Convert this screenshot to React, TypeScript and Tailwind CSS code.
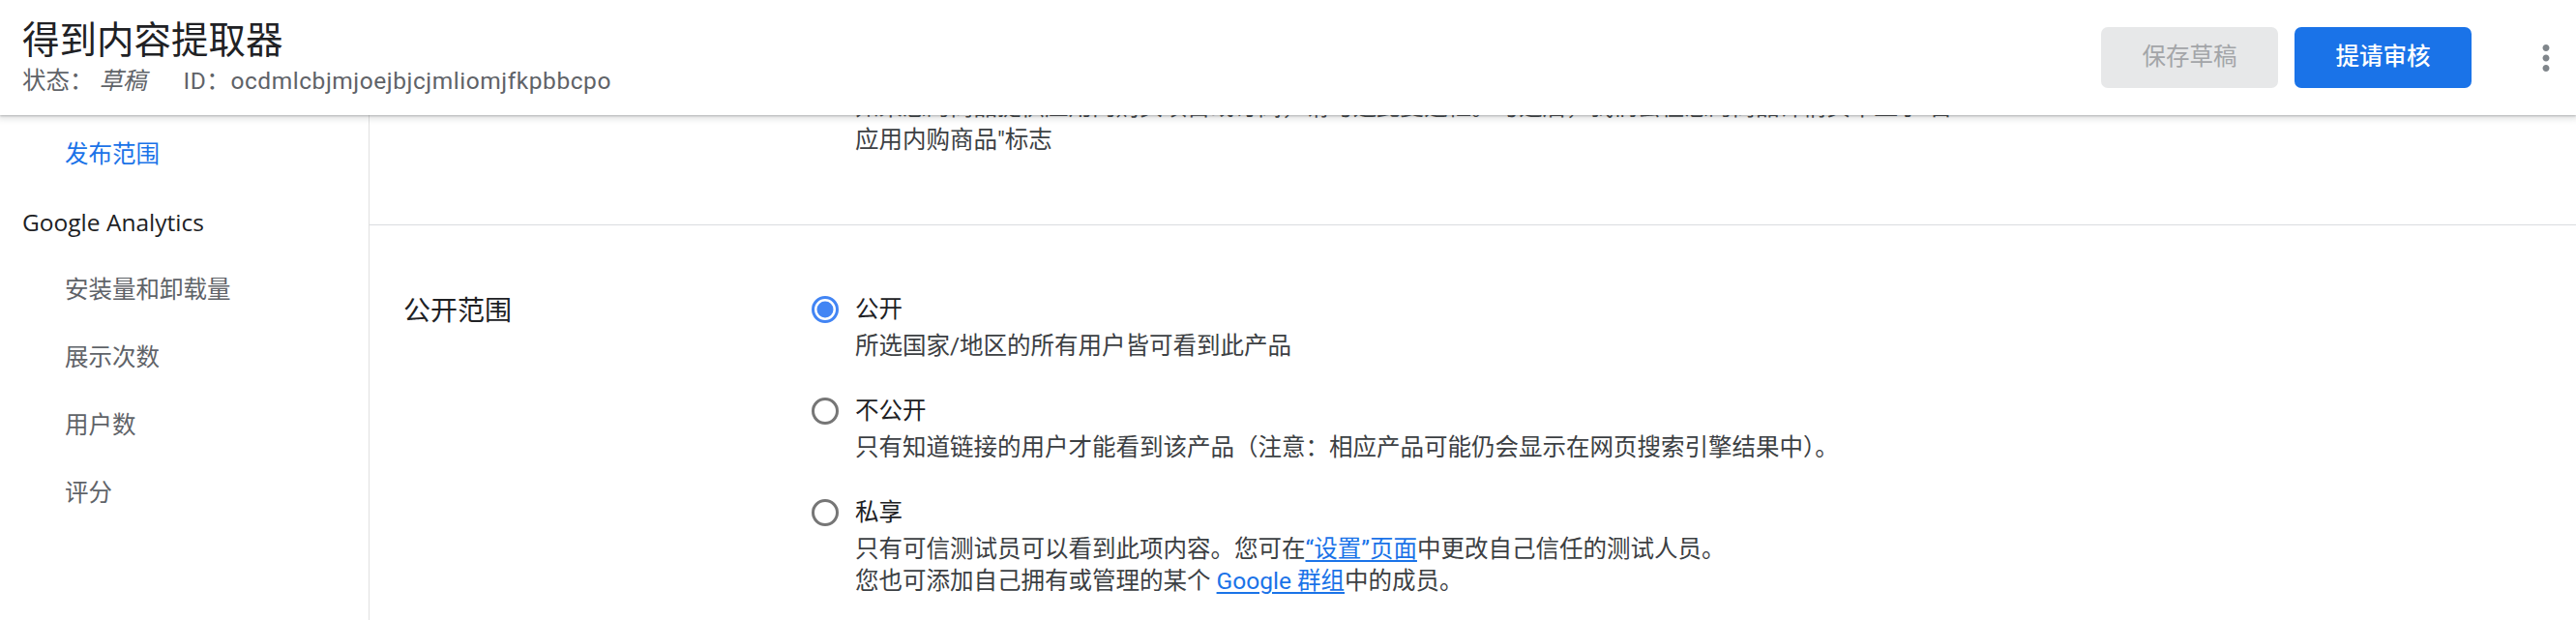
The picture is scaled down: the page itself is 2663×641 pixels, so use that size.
import React from 'react';

const FONT = "font-[Roboto,'Noto_Sans_CJK_SC',sans-serif]";

function Radio({ checked }: { checked?: boolean }) {
  return (
    <svg width="28" height="28" viewBox="0 0 28 28" className="shrink-0">
      <circle cx="14" cy="14" r="12.5" fill="none" stroke={checked ? '#4285f4' : '#767676'} strokeWidth="3" />
      {checked && <circle cx="14" cy="14" r="8.5" fill="#4285f4" />}
    </svg>
  );
}

function Option({
  label,
  checked,
  children,
}: {
  label: string;
  checked?: boolean;
  children: React.ReactNode;
}) {
  return (
    <div className="flex">
      <div className="h-[36px] w-[45px] flex items-center">
        <Radio checked={checked} />
      </div>
      <div>
        <div className="text-[24.5px] leading-[36px] text-[#202124]">{label}</div>
        <div className="mt-[3px] text-[24.5px] leading-[33px] text-[#3c4043]">{children}</div>
      </div>
    </div>
  );
}

const NAV = ['安装量和卸载量', '展示次数', '用户数', '评分'];

export default function App() {
  return (
    <div className={`${FONT} h-[641px] w-full flex flex-col overflow-hidden bg-white`}>
      {/* Header */}
      <header className="relative z-10 h-[119px] shrink-0 flex items-center bg-white pl-[23px] pr-[10px] shadow-[0_1px_2px_rgba(60,64,67,0.3),0_2px_6px_2px_rgba(60,64,67,0.15)]">
        <div className="flex-1 min-w-0">
          <h1 className="text-[38.5px] leading-[48px] text-[#202124]">得到内容提取器</h1>
          <div className="flex text-[24.5px] leading-[35px] text-[#5f6368] whitespace-nowrap">
            <span>状态：</span>
            <span className="ml-[6px] italic">草稿</span>
            <span className="ml-[38px] tracking-[0.55px]">ID：ocdmlcbjmjoejbjcjmliomjfkpbbcpo</span>
          </div>
        </div>
        <div className="flex gap-[17px]">
          <button className="h-[63px] w-[183px] rounded-[7px] bg-[#e7e8e9] text-[24.5px] text-[#a3a5a8]">保存草稿</button>
          <button className="h-[63px] w-[183px] rounded-[7px] bg-[#1a73e8] text-[24.5px] font-medium text-white">提请审核</button>
        </div>
        <div className="ml-[56px] h-[42px] w-[42px] flex items-center justify-center">
          <svg width="42" height="42" viewBox="0 0 24 24" fill="#80868b">
            <path d="M12 8c1.1 0 2-.9 2-2s-.9-2-2-2-2 .9-2 2 .9 2 2 2zm0 2c-1.1 0-2 .9-2 2s.9 2 2 2 2-.9 2-2-.9-2-2-2zm0 6c-1.1 0-2 .9-2 2s.9 2 2 2 2-.9 2-2-.9-2-2-2z" />
          </svg>
        </div>
      </header>

      <div className="flex flex-1 min-h-0">
        {/* Sidebar */}
        <aside className="w-[382px] shrink-0 border-r border-[#e0e0e0] pt-[6px]">
          <div className="h-[70px] flex items-center pl-[67px] text-[24.5px] text-[#1a73e8]">发布范围</div>
          <div className="h-[70px] flex items-center pl-[23px] font-['Open_Sans',sans-serif] text-[24.5px] font-medium text-[#202124]">
            Google Analytics
          </div>
          {NAV.map((item) => (
            <div key={item} className="h-[70px] flex items-center pl-[67px] text-[24.5px] text-[#5f6368]">
              {item}
            </div>
          ))}
        </aside>

        {/* Main */}
        <main className="flex-1 min-w-0 overflow-hidden">
          <div className="-mt-[25px]">
            {/* In-app purchase section (scrolled) */}
            <div className="flex pl-[35px] pb-[70px] border-b border-[#dadce0]">
              <div className="w-[422px] shrink-0" />
              <div className="pl-[45px] text-[24.5px] leading-[34px] text-[#3c4043] whitespace-nowrap">
                如果您的商品提供应用内购买项目或订阅，请勾选此复选框。勾选后，我们会在您的商品详情页中显示"含
                <br />
                应用内购商品"标志
              </div>
            </div>

            {/* Visibility */}
            <div className="flex pl-[35px] pt-[69px]">
              <div className="w-[422px] shrink-0 text-[28px] leading-[40px] text-[#202124]">公开范围</div>
              <div className="flex flex-col gap-[33px]">
                <Option label="公开" checked>
                  所选国家/地区的所有用户皆可看到此产品
                </Option>
                <Option label="不公开">
                  只有知道链接的用户才能看到该产品（注意：相应产品可能仍会显示在网页搜索引擎结果中）。
                </Option>
                <Option label="私享">
                  只有可信测试员可以看到此项内容。您可在
                  <a className="text-[#1a73e8] underline underline-offset-[3px]">“设置”页面</a>
                  中更改自己信任的测试人员。
                  <br />
                  您也可添加自己拥有或管理的某个{' '}
                  <a className="text-[#1a73e8] underline underline-offset-[3px]">Google 群组</a>
                  中的成员。
                </Option>
              </div>
            </div>
          </div>
        </main>
      </div>
    </div>
  );
}
